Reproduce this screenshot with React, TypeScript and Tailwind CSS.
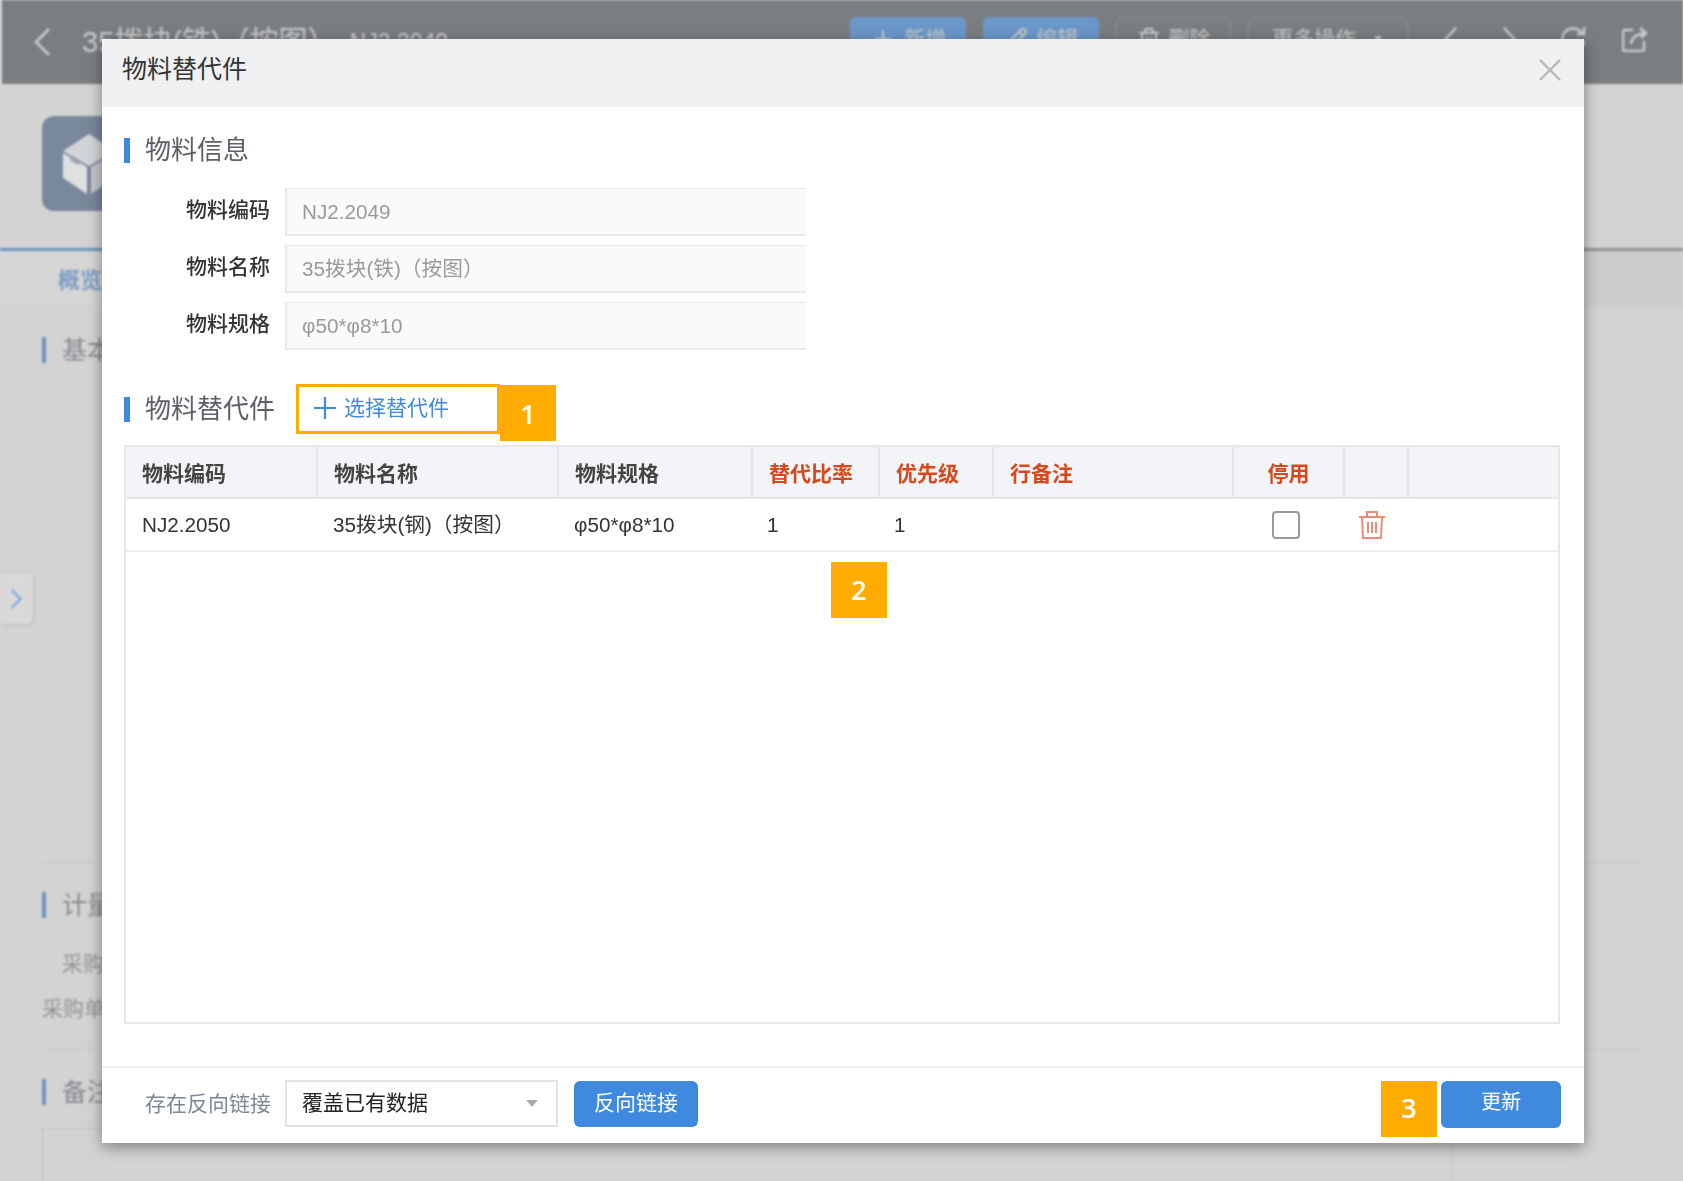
import React from 'react';
import { ChevronRight, Plus, Pencil, Trash2 } from 'lucide-react';

const FONT = "font-['Liberation_Sans','Noto_Sans_CJK_SC',sans-serif]";

const columns = [
  { title: '物料编码', width: 'w-[191px]' },
  { title: '物料名称', width: 'w-[241px]' },
  { title: '物料规格', width: 'w-[194px]' },
  { title: '替代比率', width: 'w-[127px]', required: true },
  { title: '优先级', width: 'w-[114px]', required: true },
  { title: '行备注', width: 'w-[240px]', required: true },
  { title: '停用', width: 'w-[111px]', required: true, center: true },
  { title: '', width: 'w-[64px]' },
  { title: '', width: '' },
];

const fields = [
  { label: '物料编码', value: 'NJ2.2049' },
  { label: '物料名称', value: '35拨块(铁)（按图）' },
  { label: '物料规格', value: 'φ50*φ8*10' },
];

const Badge = ({ n, className }: { n: number; className: string }) => (
  <div className={`absolute w-[56px] h-[56px] bg-[#ffab00] text-white flex items-center justify-center text-[27px] font-semibold font-['Open_Sans',sans-serif] ${className}`}>
    {n}
  </div>
);

const SectionTitle = ({ text }: { text: string }) => (
  <div className="flex items-center h-[26px] gap-[15px]">
    <span className="w-[6px] h-[25px] bg-[#3f8ade]"></span>
    <span className="text-[26px] leading-none text-[#5c6066]">{text}</span>
  </div>
);

const BackSection = ({ title, className }: { title: string; className: string }) => (
  <div className={`flex items-center gap-[16px] h-[28px] ${className}`}>
    <span className="w-[4px] h-[26px] bg-[#6f93bd]"></span>
    <span className="text-[25px] leading-none text-[#85898e]">{title}</span>
  </div>
);

const BackPage = () => (
  <div className="w-full h-full bg-[#d3d3d3] flex flex-col blur-[0.8px]">
    {/* Top bar */}
    <header className="h-[84px] shrink-0 ml-[2px] bg-[#7b7e81] flex items-center pl-[31px] pr-[35px] text-[#c9ccce]">
      <svg width="18" height="28" viewBox="0 0 18 28" fill="none" stroke="currentColor" strokeWidth="2.6">
        <path d="M16 1 L3 14 L16 27" />
      </svg>
      <span className="ml-[31px] text-[29px] leading-none">35拨块(铁)（按图）</span>
      <span className="ml-[13px] text-[23px]">NJ2.2049</span>
      <div className="ml-auto flex items-start self-start pt-[17px] gap-[17px] text-[21px]">
        <div className="w-[116px] h-[44px] rounded-[6px] bg-[#6b97c9] flex items-center justify-center gap-[8px]"><Plus size={26} />新增</div>
        <div className="w-[116px] h-[44px] rounded-[6px] bg-[#6b97c9] flex items-center justify-center gap-[8px]"><Pencil size={24} />编辑</div>
        <div className="w-[115px] h-[44px] rounded-[6px] border border-[#8f9294] flex items-center justify-center gap-[8px]"><Trash2 size={24} />删除</div>
        <div className="w-[160px] h-[44px] rounded-[6px] border border-[#8f9294] flex items-center justify-center gap-2">更多操作 <span className="text-[12px] ml-[8px]">▼</span></div>
      </div>
      <svg width="15" height="30" viewBox="0 0 15 30" fill="none" stroke="currentColor" strokeWidth="2.4" className="ml-[34px]">
        <path d="M14 1 L1 15 L14 29" />
      </svg>
      <svg width="15" height="30" viewBox="0 0 15 30" fill="none" stroke="currentColor" strokeWidth="2.4" className="ml-[46px]">
        <path d="M1 1 L14 15 L1 29" />
      </svg>
      <svg width="26" height="26" viewBox="0 0 26 26" fill="none" stroke="currentColor" strokeWidth="2.4" className="ml-[42px] mt-[-6px]">
        <path d="M22 7 A11 11 0 1 0 24 15 M24 1 V8 H17" />
      </svg>
      <svg width="26" height="26" viewBox="0 0 26 26" fill="none" stroke="currentColor" strokeWidth="2.6" className="ml-[36px] mt-[-6px]">
        <path d="M11 4 H3 Q1 4 1 6 V23 Q1 25 3 25 H20 Q22 25 22 23 V15" />
        <path d="M9 18 Q10 9 22 7 M18 2 L24 7 L19 12" />
      </svg>
    </header>

    {/* Item head */}
    <div className="h-[164px] shrink-0 pl-[42px] pt-[32px]">
      <div className="w-[120px] h-[95px] rounded-[12px] bg-[#7a889b] flex items-center pl-[21px]">
        <svg width="52" height="60" viewBox="0 0 52 60">
          <path d="M26 0 L52 17 L26 32 L0 17 Z" fill="#d2d5d8" />
          <path d="M0 19 L24 33 V60 L0 44 Z" fill="#dfe0e2" />
          <path d="M28 33 L52 19 V44 L28 60 Z" fill="#c4c7cb" />
          <path d="M7 25 L16 30" stroke="#8a94a3" strokeWidth="2" />
        </svg>
      </div>
    </div>

    {/* Tabs */}
    <div className="h-[58px] shrink-0 border-t-[3px] border-[#8f9193] bg-[#cdcdcf] flex">
      <div className="w-[200px] mt-[-3px] border-t-[3px] border-[#6f93bd] bg-[#d6d6d6] pl-[58px] pt-[4px] flex items-center">
        <span className="text-[22px] leading-none text-[#7b9cc4] font-bold">概览</span>
      </div>
    </div>

    {/* Sections under the dialog */}
    <div className="flex-1 px-[42px] pr-[41px] flex flex-col">
      <BackSection title="基本" className="mt-[30px]" />
      <div className="mt-[498px] h-px bg-[#c6c6c6]"></div>
      <BackSection title="计量" className="mt-[28px]" />
      <div className="mt-[34px] pl-[20px] text-[21px] leading-none text-[#909398]">采购</div>
      <div className="mt-[24px] text-[21px] leading-none text-[#909398]">采购单</div>
      <div className="mt-[29px] h-px bg-[#c6c6c6]"></div>
      <BackSection title="备注" className="mt-[29px]" />
      <div className="mt-[22px] w-[1410px] h-[80px] border border-[#c2c2c2]"></div>
    </div>

    {/* Sidebar handle */}
    <div className="absolute left-0 top-[573px] w-[33px] h-[51px] bg-[#d9d9d9] rounded-r-[6px] shadow-[1px_1px_4px_rgba(0,0,0,0.12)] flex items-center justify-center text-[#7ba6dc]">
      <ChevronRight size={40} strokeWidth={1.6} />
    </div>
  </div>
);

const Dialog = () => (
  <div className="absolute left-[102px] top-[39px] w-[1482px] h-[1104px] bg-white flex flex-col shadow-[0_4px_14px_rgba(0,0,0,0.4)]">
    {/* Title */}
    <div className="h-[68px] shrink-0 bg-[#eff0f2] flex items-center justify-between pl-[20px] pr-[23px]">
      <span className="text-[25px] leading-none text-[#333] pb-[7px]">物料替代件</span>
      <svg width="22" height="22" viewBox="0 0 22 22" stroke="#b5b7ba" strokeWidth="2.4" fill="none" className="mb-[6px]">
        <path d="M1 1 L21 21 M21 1 L1 21" />
      </svg>
    </div>

    {/* Body */}
    <div className="flex-1 px-[22px] flex flex-col">
      <div className="mt-[30px]">
        <SectionTitle text="物料信息" />
      </div>
      <div className="mt-[25px] flex flex-col gap-[9px]">
        {fields.map((f) => (
          <div key={f.label} className="flex items-center gap-[15px]">
            <label className="w-[146px] text-right text-[21px] leading-none text-[#333] font-medium pb-[6px]">{f.label}</label>
            <div className="w-[521px] h-[48px] bg-[#fafafa] border-l-2 border-b-2 border-t border-[#e8e8e8] pl-[15px] flex items-center text-[20.7px] text-[#9a9a9a]">
              {f.value}
            </div>
          </div>
        ))}
      </div>

      <div className="mt-[34px] flex items-center h-[50px]">
        <SectionTitle text="物料替代件" />
        <div className="relative ml-[21px] w-[204px] h-[50px] border-[3px] border-[#ffab00] flex items-center pl-[14px] pb-[3px] gap-[7px] text-[#3f8ade] text-[21px] leading-none">
          <svg width="24" height="24" viewBox="0 0 24 24" stroke="currentColor" strokeWidth="2.2" className="shrink-0">
            <path d="M12 1 V23 M1 12 H23" />
          </svg>
          选择替代件
          <Badge n={1} className="left-[calc(100%+3px)] top-[-2px]" />
        </div>
      </div>

      {/* Grid */}
      <div className="relative mt-[11px] w-[1436px] h-[579px] border-2 border-[#e6e8ee]">
        <table className="w-full table-fixed border-collapse">
          <thead>
            <tr className="h-[51px] bg-[#f2f4f7] border-b-2 border-[#e4e6ea]">
              {columns.map((c, i) => (
                <th
                  key={i}
                  className={`${c.width} border-r-2 last:border-r-0 border-[#e4e6ea] px-[16px] pt-[3px] text-[21px] font-bold ${c.center ? 'text-center' : 'text-left'} ${c.required ? 'text-[#d9481c]' : 'text-[#444]'}`}
                >
                  {c.title}
                </th>
              ))}
            </tr>
          </thead>
          <tbody>
            <tr className="h-[53px] border-b-2 border-[#eceef1] text-[20.7px] text-[#333]">
              <td className="px-[16px]">NJ2.2050</td>
              <td className="px-[16px]">35拨块(钢)（按图）</td>
              <td className="px-[16px]">φ50*φ8*10</td>
              <td className="px-[15px]">1</td>
              <td className="px-[15px]">1</td>
              <td></td>
              <td className="pr-[5px]">
                <div className="mx-auto w-[28px] h-[28px] rounded-[4px] border-2 border-[#999]"></div>
              </td>
              <td className="pl-[14px]">
                <svg width="28" height="30" viewBox="0 0 28 30" fill="none" stroke="#f08a76" strokeWidth="2">
                  <path d="M1 7 H27 M9 7 V2 H19 V7 M4 7 L5 28 H23 L24 7 M10 12 V23 M14 12 V23 M18 12 V23" />
                </svg>
              </td>
              <td></td>
            </tr>
          </tbody>
        </table>
        <Badge n={2} className="left-[705px] top-[115px]" />
      </div>
    </div>

    {/* Footer */}
    <div className="h-[77px] shrink-0 border-t-2 border-[#eceef1] flex items-center pl-[43px] pr-[23px] pb-[3px]">
      <span className="w-[140px] text-[21px] leading-none text-[#7c8794] pb-[2px]">存在反向链接</span>
      <div className="w-[273px] h-[47px] mb-[2px] border-2 border-[#e2e2e2] flex items-center justify-between pl-[15px] pr-[18px] text-[21px] text-[#222]">
        覆盖已有数据
        <span className="w-0 h-0 border-x-[6px] border-x-transparent border-t-[7px] border-t-[#aaa]"></span>
      </div>
      <button className="ml-[16px] w-[124px] h-[46px] rounded-[6px] bg-[#3f8ade] text-white text-[21px] leading-none pb-[4px]">反向链接</button>
      <div className="relative ml-auto">
        <button className="block w-[120px] h-[47px] rounded-[6px] bg-[#3f8ade] text-white text-[20px] leading-none pb-[4px]">更新</button>
        <Badge n={3} className="right-[calc(100%+4px)] top-0" />
      </div>
    </div>
  </div>
);

export default function App() {
  return (
    <div className={`relative w-[1683px] h-[1181px] overflow-hidden bg-[#d3d3d3] ${FONT}`}>
      <BackPage />
      <Dialog />
    </div>
  );
}
